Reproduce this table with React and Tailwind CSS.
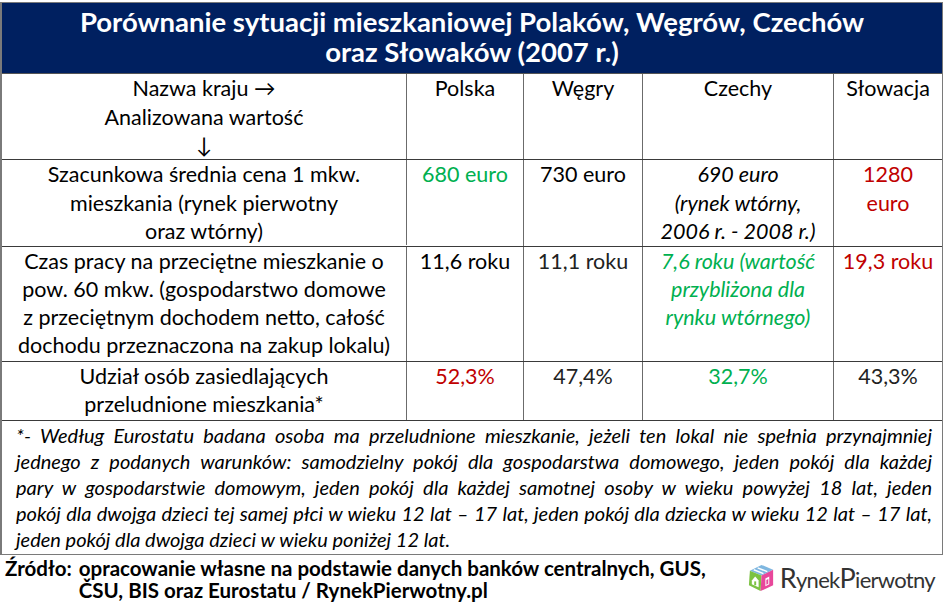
import React from "react";

const GREEN = "text-[#00b050]";
const RED = "text-[#c00000]";

const Cube = () => (
  <svg width="31" height="31" viewBox="0 0 32 32">
    {/* top */}
    <polygon points="4,9 16,3 28,8 16,14" fill="#7fb7e0" />
    <polyline points="8,8 18,12" stroke="#fff" strokeWidth="1.5" fill="none" />
    <polyline points="12,6 22,10" stroke="#fff" strokeWidth="1.5" fill="none" />
    {/* left face */}
    <polygon points="4,9 16,14 15,30 3,24" fill="#7cc242" />
    <polygon points="6,19 9.5,15 13,19 13,26 6,23" fill="#fff" />
    <rect x="8.5" y="20" width="2" height="4" fill="#7cc242" />
    {/* right face */}
    <polygon points="16,14 28,8 28,24 15,30" fill="#e8479b" />
    <polygon points="20,17 24,15 24,23 20,25" fill="#fff" />
    <polygon points="21,18.5 23,17.5 23,22.5 21,23.5" fill="#e8479b" />
  </svg>
);

const Cell = ({ children, className = "", last = false }) => (
  <div
    className={`px-1 text-center ${last ? "" : "border-r border-[#6b6b6b]"} ${className}`}
  >
    {children}
  </div>
);

const Row = ({ cells }) => (
  <div className="grid grid-cols-[405px_117px_119px_191px_1fr] border-b border-[#3a3a3a]">
    {cells.map((c, i) => (
      <Cell key={i} className={c.cls} last={i === cells.length - 1}>
        {c.text}
      </Cell>
    ))}
  </div>
);

export default function App() {
  return (
    <div
      className="w-[945px] h-[605px] bg-white text-black pt-[2px] overflow-hidden"
      style={{ fontFamily: "Lato, 'Open Sans', sans-serif" }}
    >
      <div className="w-[943px] border-l-2 border-r border-t border-[#7a7a7a]">
        {/* title */}
        <div className="bg-[#002060] text-white font-bold text-center text-[27.5px] leading-[30px] pt-[4px] pb-[6px] border-b border-[#555]">
          <div>Porównanie sytuacji mieszkaniowej Polaków, Węgrów, Czechów</div>
          <div>oraz Słowaków (2007 r.)</div>
        </div>

        <div className="text-[21.5px] leading-[28.5px]">
          <Row
            cells={[
              {
                text: (
                  <>
                    Nazwa kraju →<br />
                    Analizowana wartość
                    <br />↓
                  </>
                ),
                cls: "h-[85px]",
              },
              { text: "Polska" },
              { text: "Węgry" },
              { text: "Czechy" },
              { text: "Słowacja" },
            ]}
          />
          <Row
            cells={[
              {
                text: (
                  <>
                    Szacunkowa średnia cena 1 mkw.
                    <br />
                    mieszkania (rynek pierwotny
                    <br />
                    oraz wtórny)
                  </>
                ),
                cls: "h-[85px]",
              },
              { text: "680 euro", cls: GREEN },
              { text: "730 euro" },
              {
                text: (
                  <>
                    690 euro
                    <br />
                    (rynek wtórny,
                    <br />
                    2006 r. - 2008 r.)
                  </>
                ),
                cls: "italic",
              },
              {
                text: (
                  <>
                    1280
                    <br />
                    euro
                  </>
                ),
                cls: RED,
              },
            ]}
          />
          <Row
            cells={[
              {
                text: (
                  <>
                    Czas pracy na przeciętne mieszkanie o<br />
                    pow. 60 mkw. (gospodarstwo domowe
                    <br />
                    z przeciętnym dochodem netto, całość
                    <br />
                    dochodu przeznaczona na zakup lokalu)
                  </>
                ),
                cls: "h-[114px] leading-[28px] whitespace-nowrap",
              },
              { text: "11,6 roku" },
              { text: "11,1 roku", cls: "text-[#222]" },
              {
                text: (
                  <>
                    7,6 roku (wartość
                    <br />
                    przybliżona dla
                    <br />
                    rynku wtórnego)
                  </>
                ),
                cls: `italic ${GREEN} leading-[28px] whitespace-nowrap`,
              },
              { text: "19,3 roku", cls: `${RED} whitespace-nowrap` },
            ]}
          />
          <Row
            cells={[
              {
                text: (
                  <>
                    Udział osób zasiedlających
                    <br />
                    przeludnione mieszkania*
                  </>
                ),
                cls: "h-[58px]",
              },
              { text: "52,3%", cls: RED },
              { text: "47,4%", cls: "text-[#222]" },
              { text: "32,7%", cls: GREEN },
              { text: "43,3%", cls: "text-[#222]" },
            ]}
          />
        </div>

        {/* footnote */}
        <div className="italic text-[20px] leading-[26px] pl-[14px] pr-[10px] pt-[1px] pb-[2px] border-b border-[#7a7a7a]">
          <div className="text-justify [text-align-last:justify] whitespace-nowrap">
            *- Według Eurostatu badana osoba ma przeludnione mieszkanie, jeżeli ten lokal nie spełnia przynajmniej
          </div>
          <div className="text-justify [text-align-last:justify]">
            jednego z podanych warunków: samodzielny pokój dla gospodarstwa domowego, jeden pokój dla każdej
          </div>
          <div className="text-justify [text-align-last:justify]">
            pary w gospodarstwie domowym, jeden pokój dla każdej samotnej osoby w wieku powyżej 18 lat, jeden
          </div>
          <div className="text-justify [text-align-last:justify] whitespace-nowrap">
            pokój dla dwojga dzieci tej samej płci w wieku 12 lat – 17 lat, jeden pokój dla dziecka w wieku 12 lat – 17 lat,
          </div>
          <div>jeden pokój dla dwojga dzieci w wieku poniżej 12 lat.</div>
        </div>
      </div>

      {/* source + logo */}
      <div className="flex items-start justify-between pt-[2px] pr-[10px]">
        <div className="flex font-bold text-[20.5px] leading-[22px] pl-[5px] whitespace-nowrap">
          <span className="pr-[7px]">Źródło:</span>
          <span>
            opracowanie własne na podstawie danych banków centralnych, GUS,
            <br />
            ČSU, BIS oraz Eurostatu / RynekPierwotny.pl
          </span>
        </div>
        <div className="flex items-center gap-[3px] pt-[5px]">
          <Cube />
          <span className="text-[#333] text-[22px] leading-none tracking-[-0.7px]">
            <span className="text-[27px]">R</span>ynek<span className="text-[27px]">P</span>ierwotny
          </span>
        </div>
      </div>
    </div>
  );
}
